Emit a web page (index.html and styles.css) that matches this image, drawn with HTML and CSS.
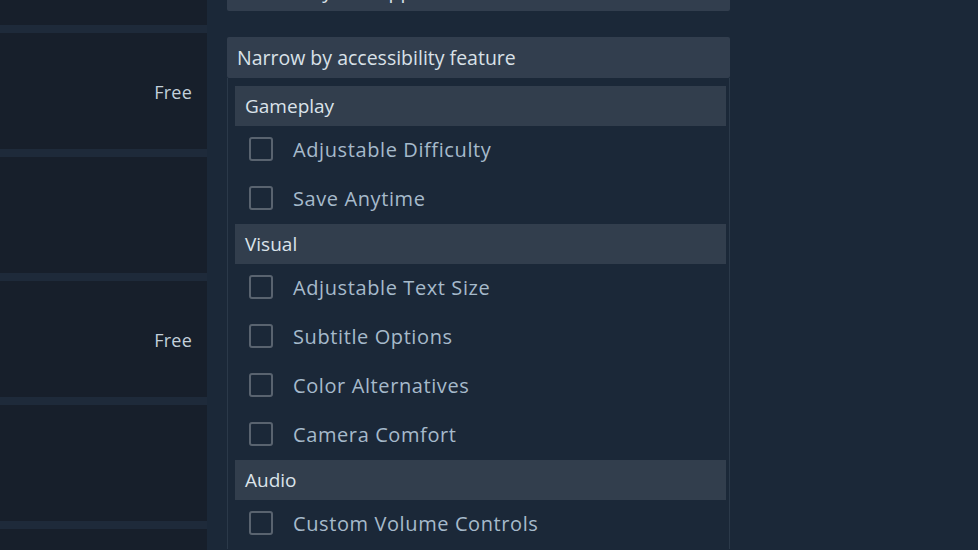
FILE: index.html
```html
<!DOCTYPE html>
<html>
<head>
<meta charset="utf-8">
<link rel="stylesheet" href="styles.css">
</head>
<body>
<div class="page">
  <div class="results">
    <div class="card card-first"></div>
    <div class="card"><span class="price">Free</span></div>
    <div class="card"></div>
    <div class="card"><span class="price">Free</span></div>
    <div class="card"></div>
    <div class="card"></div>
  </div>
  <div class="filters">
    <div class="block block-prev">
      <div class="block-header">Narrow by VR Support</div>
    </div>
    <div class="block">
      <div class="block-header">Narrow by accessibility feature</div>
      <div class="block-body">
        <div class="group">Gameplay</div>
        <label class="option"><span class="box"></span><span class="label">Adjustable Difficulty</span></label>
        <label class="option"><span class="box"></span><span class="label">Save Anytime</span></label>
        <div class="group">Visual</div>
        <label class="option"><span class="box"></span><span class="label">Adjustable Text Size</span></label>
        <label class="option"><span class="box"></span><span class="label">Subtitle Options</span></label>
        <label class="option"><span class="box"></span><span class="label">Color Alternatives</span></label>
        <label class="option"><span class="box"></span><span class="label">Camera Comfort</span></label>
        <div class="group">Audio</div>
        <label class="option"><span class="box"></span><span class="label">Custom Volume Controls</span></label>
      </div>
    </div>
  </div>
</div>
</body>
</html>
```
FILE: styles.css
```css
html, body {
  margin: 0;
  padding: 0;
  background: #1b2838;
  height: 100%;
  overflow: hidden;
}
body {
  font-family: "Open Sans", "Noto Sans", Arial, sans-serif;
}
.page {
  display: flex;
  align-items: flex-start;
  gap: 20px;
}
.results {
  width: 207px;
  display: flex;
  flex-direction: column;
  gap: 8px;
  margin-top: -91px;
  background: #1e2a3a;
}
.card {
  height: 116px;
  background: #171f2b;
  display: flex;
  align-items: center;
  justify-content: flex-end;
  padding-right: 15px;
}
.price {
  color: #c3d0db;
  font-size: 18px;
  letter-spacing: 0.2px;
  padding-top: 2px;
}
.filters {
  width: 503px;
  display: flex;
  flex-direction: column;
  gap: 26px;
  margin-top: -30px;
}
.block-header {
  height: 41px;
  background: #323e4e;
  color: #d9e1e8;
  font-size: 19.5px;
  display: flex;
  align-items: center;
  padding-left: 10px;
  border-radius: 2px;
}
.block-body {
  border-left: 1px solid #2b3949;
  border-right: 1px solid #2b3949;
  padding: 8px 3px 0 7px;
}
.group {
  height: 40px;
  background: #323e4d;
  color: #dbe3ea;
  font-size: 19px;
  display: flex;
  align-items: center;
  padding-left: 10px;
}
.option {
  height: 49px;
  box-sizing: border-box;
  padding-bottom: 3px;
  display: flex;
  align-items: center;
  padding-left: 14px;
}
.box {
  width: 20px;
  height: 20px;
  border: 2px solid #59636f;
  border-radius: 3px;
  margin-right: 20px;
  flex: none;
}
.label {
  color: #a6bacb;
  font-size: 20px;
  letter-spacing: 0.6px;
}
```
